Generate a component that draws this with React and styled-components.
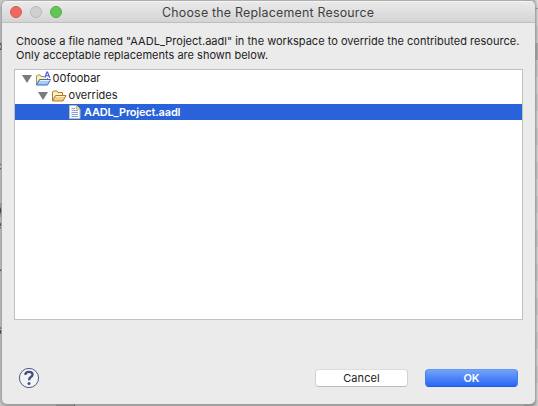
import React from "react";
import styled, { createGlobalStyle } from "styled-components";

const Global = createGlobalStyle`
  * { box-sizing: border-box; }
  body { margin: 0; overflow: hidden; font-family: Inter, sans-serif; }
`;

const Desktop = styled.div`
  position: relative;
  width: 538px;
  height: 406px;
  padding: 1px 3px 2px 2px;
  background: #c9c9c9;
  overflow: hidden;
`;

const BackList = styled.div`
  position: absolute;
  top: 0;
  right: 0;
  width: 14px;
  height: 406px;
  background: linear-gradient(90deg, rgba(0, 0, 0, 0.16) 10px, rgba(0, 0, 0, 0) 14px),
    linear-gradient(#dedede 8px, #aaa 8px, #aaa 9px, transparent 9px, transparent 43px, #b5b5b5 43px, #b5b5b5 60px, transparent 60px),
    repeating-linear-gradient(#d4d4d4 0 9px, #dedede 9px 26px, #d4d4d4 26px 34px);
`;

const BackText = styled.span`
  position: absolute;
  left: ${(p) => p.$x}px;
  top: ${(p) => p.$y}px;
  font-size: 11px;
  line-height: 14px;
  color: #333;
  background: ${(p) => p.$bg || "transparent"};
`;

const BackEdge = styled.div`
  position: absolute;
  left: ${(p) => p.$x}px;
  bottom: 0;
  width: ${(p) => p.$w}px;
  height: 12px;
  background: ${(p) => p.$c};
`;

const Window = styled.div`
  position: relative;
  display: flex;
  flex-direction: column;
  height: 403px;
  border-radius: 5px;
  background: #ebebeb;
  box-shadow: 0 0 0 0.5px #aaa, 0 1px 4px rgba(0, 0, 0, 0.45);
  overflow: hidden;
`;

const TitleBar = styled.header`
  position: relative;
  flex: none;
  display: flex;
  align-items: center;
  height: 22px;
  padding-left: 8px;
  gap: 8px;
  border-bottom: 1px solid #bebebe;
  background: linear-gradient(#ebebeb, #d4d4d4);
  box-shadow: inset 0 1px #f4f4f4;
`;

const Light = styled.span`
  width: 12px;
  height: 12px;
  border-radius: 50%;
  background: ${(p) => p.$fill};
  border: 0.5px solid ${(p) => p.$edge};
`;

const Title = styled.h1`
  margin: 2px 0 0 92px;
  font-size: 12.4px;
  line-height: 21px;
  font-weight: 400;
  letter-spacing: 0.22px;
  color: #404040;
  white-space: nowrap;
`;

const Message = styled.p`
  margin: 11px 0 0 14px;
  font-size: 11px;
  line-height: 14px;
  letter-spacing: ${(p) => p.$track}px;
  color: #222;
  white-space: nowrap;
  & + & { margin-top: 0; }
`;

const Tree = styled.div`
  flex: none;
  width: 509px;
  height: 251px;
  margin: 7px 0 0 12px;
  border: 1px solid #c0c0c0;
  background: #fff;
`;

const Row = styled.div`
  display: flex;
  align-items: center;
  height: ${(p) => p.$h || 17}px;
  padding-left: ${(p) => p.$indent}px;
  background: ${(p) => (p.$selected ? "#2a62d9" : "transparent")};
  color: ${(p) => (p.$selected ? "#fff" : "#222")};
  font-weight: ${(p) => (p.$selected ? 600 : 400)};
  font-size: 11px;
  letter-spacing: ${(p) => p.$track}px;
  svg { flex: none; }
`;

const Arrow = styled.span`
  border: 5px solid transparent;
  border-top: 8px solid #7b7b7b;
  border-bottom: 0;
  margin-right: ${(p) => p.$gap}px;
`;

const RowLabel = styled.span`
  margin-left: ${(p) => p.$gap}px;
  line-height: 17px;
`;

const Footer = styled.footer`
  display: flex;
  align-items: center;
  height: 24px;
  margin: 46px 17px 0 16px;
`;

const HelpButton = styled.button`
  width: 22px;
  height: 22px;
  margin-right: auto;
  padding: 0;
  border: 0;
  background: none;
  svg { display: block; }
`;

const Button = styled.button`
  height: 18px;
  width: 93px;
  padding: 0;
  margin-left: 17px;
  border-radius: 4px;
  border: 1px solid ${(p) => (p.$primary ? "#437fee" : "#d2d2d2")};
  border-top-color: ${(p) => (p.$primary ? "#6299f4" : "#dcdcdc")};
  border-bottom-color: ${(p) => (p.$primary ? "#245bdd" : "#bdbdbd")};
  background: ${(p) => (p.$primary ? "linear-gradient(#70a4f6, #2a66f5)" : "#fff")};
  color: ${(p) => (p.$primary ? "#fff" : "#222")};
  font: ${(p) => (p.$primary ? 600 : 400)} 11px/16px Inter, sans-serif;
  letter-spacing: ${(p) => (p.$primary ? 0 : 0.1)}px;
`;

const ProjectIcon = () => (
  <svg width="17" height="16" viewBox="0 0 17 16">
    <path d="M1.5 14V5l1-1h2.5l1 1.5h6.5v3" fill="#fff0b8" stroke="#a58d5c" />
    <path d="M1.5 14l3-5.5h11l-3 5.5z" fill="#a8cbf5" stroke="#3f6bb5" />
    <path d="M5 9.5h9.5" stroke="#e5f1ff" />
    <path d="M9.4 5.5V7h5.6V1H9.4z" fill="#fff" />
    <path d="M9.8 6.8L11.9 1h.6L14.7 6.8M10.6 4.8h3.3" fill="none" stroke="#4350dd" strokeWidth="1.1" />
  </svg>
);

const FolderIcon = () => (
  <svg width="16" height="14" viewBox="0 0 16 14">
    <path d="M1.5 12V3l1-1h3.5l1 1.5h4.5v3" fill="#fff0bf" stroke="#ae7b35" />
    <path d="M1.5 12l3-5.5h10.5l-3 5.5z" fill="#f4cf86" stroke="#ae7b35" />
    <path d="M5 7.5h8.5" stroke="#fff3cd" />
  </svg>
);

const FileIcon = () => (
  <svg width="12" height="14" viewBox="0 0 12 14">
    <path d="M.5.5h7l3.5 3.5v9.5H.5z" fill="#f6faff" stroke="#c3bda5" />
    <path d="M7.5.5V4H11" fill="#f6dfa0" stroke="#c9b070" />
    <path d="M2.5 3.5H6M2.5 5.5h6.5M2.5 7.5h6.5M2.5 9.5h6.5M2.5 11.5h6.5" stroke="#8ba4cf" />
  </svg>
);

const HelpIcon = () => (
  <svg width="22" height="22" viewBox="0 0 22 22">
    <circle cx="11" cy="11" r="9.6" fill="#f3f3f4" stroke="#4c5c80" strokeWidth="1" />
    <path d="M7.3 7.9C7.4 5.7 8.8 4.8 11 4.8c2.2 0 3.6 1 3.6 2.8 0 1.4-.9 2-2 2.7-1.1.7-1.5 1.3-1.5 2.9" fill="none" stroke="#3d5081" strokeWidth="2.3" />
    <circle cx="11" cy="16.6" r="1.5" fill="#3d5081" />
  </svg>
);

export default function App() {
  return (
    <>
      <Global />
      <Desktop>
        <BackList />
        <BackText $x={-4} $y={39}>p</BackText>
        <BackText $x={-5} $y={159}>c</BackText>
        <BackText $x={-5} $y={203} $bg="#aaa">o</BackText>
        <BackText $x={-5} $y={218}>e</BackText>
        <BackText $x={-1} $y={260}>.</BackText>
        <BackText $x={-4} $y={323}>s</BackText>
        <BackEdge $x={56} $w={18} $c="#aaa" />
        <BackEdge $x={74} $w={1} $c="#777" />
        <Window>
          <TitleBar>
            <Light $fill="#ee6a5f" $edge="#d65a50" />
            <Light $fill="#d0d0d0" $edge="#b8b8b8" />
            <Light $fill="#61c654" $edge="#52ad45" />
            <Title>Choose the Replacement Resource</Title>
          </TitleBar>
          <Message $track={0.015}>Choose a file named "AADL_Project.aadl" in the workspace to override the contributed resource.</Message>
          <Message $track={0.01}>Only acceptable replacements are shown below.</Message>
          <Tree>
            <Row $indent={7} $track={0}>
              <Arrow $gap={2.5} />
              <ProjectIcon />
              <RowLabel $gap={1}>00foobar</RowLabel>
            </Row>
            <Row $indent={23} $track={0}>
              <Arrow $gap={2.5} />
              <FolderIcon />
              <RowLabel $gap={2}>overrides</RowLabel>
            </Row>
            <Row $indent={54} $h={16} $track={-0.18} $selected>
              <FileIcon />
              <RowLabel $gap={3}>AADL_Project.aadl</RowLabel>
            </Row>
          </Tree>
          <Footer>
            <HelpButton aria-label="Help"><HelpIcon /></HelpButton>
            <Button>Cancel</Button>
            <Button $primary>OK</Button>
          </Footer>
        </Window>
      </Desktop>
    </>
  );
}
